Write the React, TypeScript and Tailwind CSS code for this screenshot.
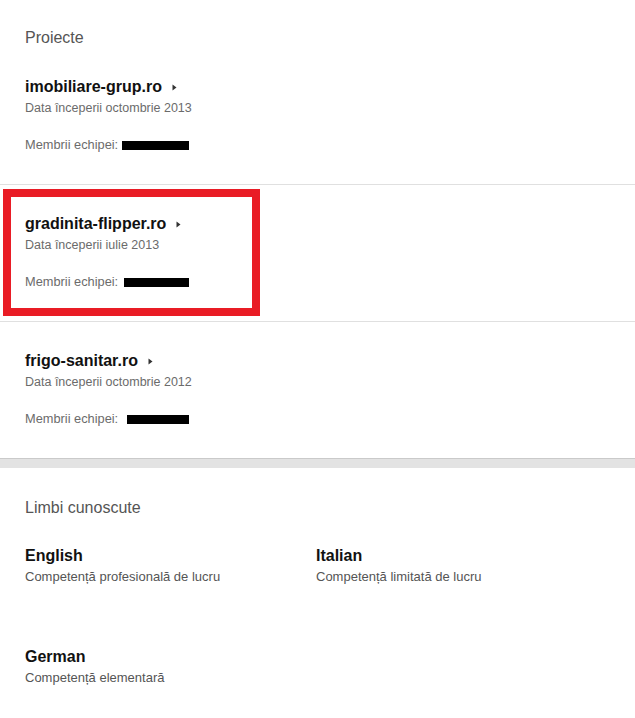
import React from "react";

const font = { fontFamily: '"Liberation Sans", Arial, sans-serif' };

function Arrow() {
  return (
    <svg width="5" height="7" viewBox="0 0 5 7" className="ml-[10px] mt-[1px]">
      <path d="M0.5 0.5 L4.5 3.5 L0.5 6.5 Z" fill="#333" />
    </svg>
  );
}

function Project({
  name,
  date,
  bar,
  border,
}: {
  name: string;
  date: string;
  bar: string;
  border?: boolean;
}) {
  return (
    <div className={border ? "border-b border-[#e0e0e0]" : ""}>
      <div className="px-[25px] pt-[29px] pb-[29px]">
        <div className="flex items-center h-[20px]">
          <span className="text-[16px] font-bold text-[#111] leading-[20px]">{name}</span>
          <Arrow />
        </div>
        <div className="text-[12.5px] leading-[22px] text-[#6b6b6b]">{date}</div>
        <div className="mt-[16px] flex items-center h-[20px] text-[12.8px] text-[#6b6b6b]">
          <span>Membrii echipei:</span>
          <span className={`inline-block h-[9px] bg-black ${bar}`} />
        </div>
      </div>
    </div>
  );
}

function Lang({ name, level }: { name: string; level: string }) {
  return (
    <div>
      <div className="text-[16px] font-bold text-[#111] leading-[20px]">{name}</div>
      <div className="text-[13px] leading-[22px] text-[#555]">{level}</div>
    </div>
  );
}

export default function App() {
  return (
    <div style={font} className="w-[635px] h-[718px] bg-white relative overflow-hidden">
      <div className="px-[25px] pt-[28px]">
        <div className="text-[16px] leading-[20px] text-[#555]">Proiecte</div>
      </div>
      <Project name="imobiliare-grup.ro" date="Data începerii octombrie 2013" bar="ml-[4px] w-[67px]" border />
      <Project name="gradinita-flipper.ro" date="Data începerii iulie 2013" bar="ml-[6px] w-[65px]" border />
      <Project name="frigo-sanitar.ro" date="Data începerii octombrie 2012" bar="ml-[9px] w-[62px]" />
      <div className="h-[10px] border-t border-[#cacaca] bg-[#e3e3e3]" />
      <div className="px-[25px] pt-[30px]">
        <div className="text-[16px] leading-[20px] text-[#555]">Limbi cunoscute</div>
        <div className="mt-[28px] grid grid-cols-[291px_1fr] gap-y-[59px]">
          <Lang name="English" level="Competență profesională de lucru" />
          <Lang name="Italian" level="Competență limitată de lucru" />
          <Lang name="German" level="Competență elementară" />
        </div>
      </div>
      <div className="absolute left-[3px] top-[189px] w-[257px] h-[127px] border-[8px] border-[#e91c25]" />
    </div>
  );
}
